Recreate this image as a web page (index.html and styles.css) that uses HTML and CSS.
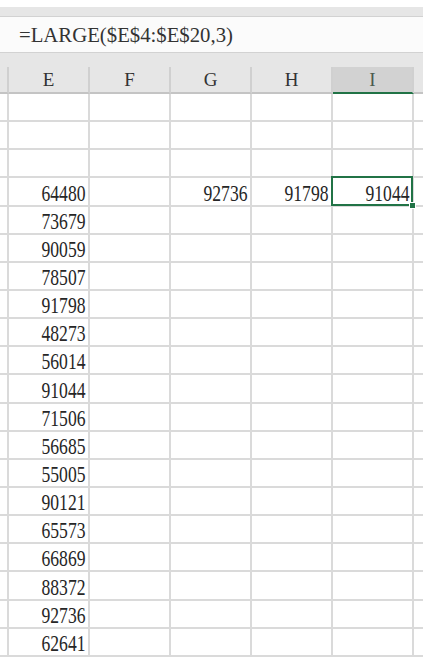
FILE: index.html
```html
<!DOCTYPE html>
<html lang="en">
<head>
  <meta charset="UTF-8">
  <title>LARGE</title>
  <link rel="stylesheet" href="styles.css">
</head>
<body>
  <div class="top-gap"></div>
  <div class="ribbon-edge"></div>
  <div class="formula-bar"><span class="formula">=LARGE($E$4:$E$20,3)</span></div>
  <div class="band"></div>

  <div class="sheet">
    <div class="row head">
      <div class="cell edge"></div>
      <div class="cell">E</div>
      <div class="cell">F</div>
      <div class="cell">G</div>
      <div class="cell">H</div>
      <div class="cell active">I</div>
      <div class="cell rest"></div>
    </div>
    <div id="rows"></div>
  </div>

  <script>
    // column E values, rows 4 - 20
    const colE = [64480, 73679, 90059, 78507, 91798, 48273, 56014, 91044, 71506,
                  56685, 55005, 90121, 65573, 66869, 88372, 92736, 62641];
    const rows = document.getElementById('rows');

    for (let r = 1; r <= 20; r++) {
      const vals = ['', '', '', '', ''];
      if (r >= 4) vals[0] = colE[r - 4];
      if (r === 4) { vals[2] = 92736; vals[3] = 91798; vals[4] = 91044; }

      const row = document.createElement('div');
      row.className = 'row';
      let html = '<div class="cell edge"></div>';
      vals.forEach((v, i) => {
        const sel = (r === 4 && i === 4) ? ' selected' : '';
        html += '<div class="cell num' + sel + '">' + (v !== '' ? '<span>' + v + '</span>' : '') + '</div>';
      });
      html += '<div class="cell rest"></div>';
      row.innerHTML = html;
      rows.appendChild(row);
    }
  </script>
</body>
</html>
```

FILE: styles.css
```css
body {
  margin: 0;
  background: #fff;
  font-family: 'Liberation Serif', 'Times New Roman', serif;
  color: #262626;
  overflow: hidden;
  height: 662px;
}
.top-gap {
  height: 7px;
  background: #fff;
}
.ribbon-edge {
  height: 9px;
  background: #e6e6e6;
  border-bottom: 1px solid #d2d2d2;
}
.formula-bar {
  height: 35px;
  background: #fbfbfb;
  border-bottom: 1px solid #d2d2d2;
  display: flex;
  align-items: center;
  padding-left: 19px;
}
.formula {
  display: inline-block;
  font-size: 22px;
  color: #333;
  transform: scaleX(0.943);
  transform-origin: left center;
  white-space: nowrap;
}
.band {
  height: 14px;
  background: #e6e6e6;
}

.sheet {
  width: 100%;
}
.row {
  display: grid;
  grid-template-columns: 9px repeat(5, 81px) 1fr;
  height: 28.15px;
}
.cell {
  box-sizing: border-box;
  border-right: 2px solid #dadada;
  border-bottom: 2px solid #dadada;
  position: relative;
}
.cell.rest {
  border-right: none;
}

.row.head {
  height: 27px;
  background: #e6e6e6;
}
.head .cell {
  border-right-color: #d0d0d0;
  border-bottom-color: #c4c4c4;
  display: flex;
  align-items: center;
  justify-content: center;
  font-size: 19px;
  color: #333;
  padding-top: 1px;
}
.head .cell.active {
  background: #d2d2d2;
  border-bottom-color: #217346;
  color: #4a5a4e;
}

.num {
  display: flex;
  align-items: flex-end;
  justify-content: flex-end;
  padding-right: 3px;
}
.num span {
  display: inline-block;
  font-size: 23px;
  line-height: 23px;
  transform: scaleX(0.765);
  transform-origin: right bottom;
  margin-bottom: 0;
}

.num.selected::after {
  content: '';
  position: absolute;
  left: -2px;
  top: -2px;
  right: -1px;
  bottom: -1px;
  border: 2px solid #217346;
}
.num.selected::before {
  content: '';
  position: absolute;
  right: -4px;
  bottom: -4px;
  width: 5px;
  height: 5px;
  background: #217346;
  border: 1px solid #fff;
  z-index: 1;
}
```
